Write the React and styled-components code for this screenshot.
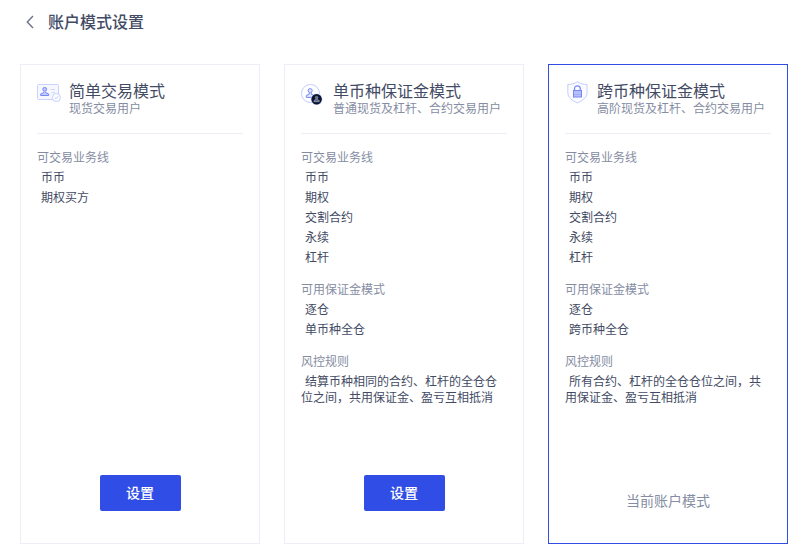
import React from "react";
import styled, { createGlobalStyle } from "styled-components";

const modes = [
  {
    title: "简单交易模式",
    desc: "现货交易用户",
    icon: "simple",
    groups: [{ label: "可交易业务线", items: ["币币", "期权买方"] }],
  },
  {
    title: "单币种保证金模式",
    desc: "普通现货及杠杆、合约交易用户",
    icon: "single",
    groups: [
      { label: "可交易业务线", items: ["币币", "期权", "交割合约", "永续", "杠杆"] },
      { label: "可用保证金模式", items: ["逐仓", "单币种全仓"] },
      {
        label: "风控规则",
        items: ["结算币种相同的合约、杠杆的全仓仓位之间，共用保证金、盈亏互相抵消"],
      },
    ],
  },
  {
    title: "跨币种保证金模式",
    desc: "高阶现货及杠杆、合约交易用户",
    icon: "multi",
    current: true,
    groups: [
      { label: "可交易业务线", items: ["币币", "期权", "交割合约", "永续", "杠杆"] },
      { label: "可用保证金模式", items: ["逐仓", "跨币种全仓"] },
      {
        label: "风控规则",
        items: ["所有合约、杠杆的全仓仓位之间，共用保证金、盈亏互相抵消"],
      },
    ],
  },
];

function SimpleIcon() {
  return (
    <Icon viewBox="0 0 24 24">
      <rect x="0.5" y="3.5" width="21" height="15" rx="1" fill="#f7f8ff" stroke="#c9d2ff" />
      <path d="M13.5 8.5h4.5M14.5 11.5h3.5" stroke="#cdd5ff" />
      <circle cx="7.7" cy="8.3" r="1.9" fill="#c3cbff" stroke="#7486f6" />
      <path d="M6.7 10.7v1L3.7 13v1.5h8V13l-3-1.3v-1" fill="#c3cbff" stroke="#7486f6" />
      <circle cx="19.4" cy="16.5" r="4" fill="#fff" stroke="#c3cdff" />
      <path d="m17.7 16.5 1.3 1.3 2.3-2.5" fill="none" stroke="#bac5ff" />
    </Icon>
  );
}

function SingleIcon() {
  return (
    <Icon viewBox="0 0 24 24">
      <circle cx="9.5" cy="12.5" r="9" fill="#fff" stroke="#c3cdff" />
      <circle cx="9.2" cy="9.6" r="2" fill="#e3e8ff" stroke="#7486f6" />
      <path d="M8.2 11.7v1.6L5.3 14.5v1.9h8v-1.9l-3-1.2v-1.6" fill="#e3e8ff" stroke="#7486f6" />
      <circle cx="15.6" cy="18.2" r="5.8" fill="#c9d2ff" />
      <circle cx="15.6" cy="18.2" r="5.2" fill="#0c1430" />
      <circle cx="15.6" cy="16.6" r="1.2" fill="#5c6480" stroke="#a4abc5" strokeWidth="0.7" />
      <path d="M15 18v.7l-2 .8v1.2h5.2v-1.2l-2-.8V18" fill="#5c6480" stroke="#a4abc5" strokeWidth="0.7" />
    </Icon>
  );
}

function MultiIcon() {
  return (
    <Icon viewBox="0 0 24 24">
      <path
        d="M12.4.8c3 1.9 6.200 2.600 9.600 2.700v8c0 5-4.200 8.200-9.600 10.300C7 19.700 2.800 16.500 2.800 11.500v-8C6.200 3.400 9.400 2.700 12.400.8z"
        fill="#fbfbff"
        stroke="#c3cdff"
      />
      <path d="M9.500 10V7.700a2.900 2.900 0 0 1 5.800 0V10" fill="none" stroke="#7486f6" strokeWidth="1.200" />
      <rect x="8.500" y="9.500" width="8" height="6.500" fill="#b4bfff" stroke="#7486f6" />
      <path d="M9 13.500h7" stroke="#a0adff" />
    </Icon>
  );
}

const icons = { simple: SimpleIcon, single: SingleIcon, multi: MultiIcon };

function ModeCard({ mode }) {
  const ModeIcon = icons[mode.icon];
  return (
    <Card $active={mode.current}>
      <CardHead>
        <ModeIcon />
        <div>
          <CardTitle>{mode.title}</CardTitle>
          <CardDesc>{mode.desc}</CardDesc>
        </div>
      </CardHead>
      <Groups>
        {mode.groups.map((group) => (
          <div key={group.label}>
            <Label>{group.label}</Label>
            {group.items.map((item) => (
              <Item key={item}>{item}</Item>
            ))}
          </div>
        ))}
      </Groups>
      <CardFoot>
        {mode.current ? <Current>当前账户模式</Current> : <Button>设置</Button>}
      </CardFoot>
    </Card>
  );
}

export default function App() {
  return (
    <Page>
      <GlobalStyle />
      <Header>
        <Back viewBox="0 0 8 14">
          <path d="M7 1 1.300 7 7 13" fill="none" stroke="#6b7390" strokeWidth="1.400" />
        </Back>
        <Heading>账户模式设置</Heading>
      </Header>
      <Cards>
        {modes.map((mode) => (
          <ModeCard key={mode.title} mode={mode} />
        ))}
      </Cards>
    </Page>
  );
}

const GlobalStyle = createGlobalStyle`
  * {
    box-sizing: border-box;
  }

  body {
    margin: 0;
    background: #fff;
    font-family: "Noto Sans CJK SC", sans-serif;
    overflow: hidden;
  }
`;

const Page = styled.main`
  width: 804px;
  height: 555px;
`;

const Header = styled.header`
  display: flex;
  align-items: center;
  height: 44px;
  padding-left: 26px;
`;

const Back = styled.svg`
  width: 8px;
  height: 14px;
  margin-right: 14px;
`;

const Heading = styled.h1`
  margin: 0 0 2px;
  font-size: 16px;
  font-weight: 500;
  line-height: 24px;
  color: #434b64;
`;

const Cards = styled.div`
  display: flex;
  gap: 24px;
  padding: 20px 16px 0 20px;
`;

const Card = styled.section`
  display: flex;
  flex-direction: column;
  flex: none;
  width: 240px;
  height: 480px;
  padding: 15px 16px 32px;
  border: 1px solid ${(props) => (props.$active ? "#304ee6" : "#ebedf7")};
`;

const CardHead = styled.div`
  display: flex;
  gap: 8px;
  padding-bottom: 17px;
  border-bottom: 1px solid #ebedf7;
  white-space: nowrap;
`;

const Icon = styled.svg`
  flex: none;
  width: 24px;
  height: 24px;
  margin-top: 1px;
`;

const CardTitle = styled.h2`
  margin: 0;
  font-size: 16px;
  font-weight: 400;
  line-height: 20px;
  color: #434b64;
`;

const CardDesc = styled.p`
  margin: 0;
  font-size: 12px;
  line-height: 16px;
  color: #868da3;
`;

const Groups = styled.div`
  display: flex;
  flex-direction: column;
  gap: 16px;
  padding-top: 15px;
  font-size: 12px;
  line-height: 16px;
`;

const Label = styled.div`
  color: #868da3;
`;

const Item = styled.p`
  margin: 4px 0 0;
  text-indent: 4px;
  color: #434b64;
`;

const CardFoot = styled.div`
  display: flex;
  justify-content: center;
  margin-top: auto;
`;

const Button = styled.button`
  width: 81px;
  height: 36px;
  margin-left: 1px;
  padding: 0 1px 2px 0;
  border: 0;
  border-radius: 2px;
  background: #304ee6;
  color: #fff;
  font-family: inherit;
  font-size: 14px;
  font-weight: 500;
  line-height: 34px;
`;

const Current = styled.span`
  padding-bottom: 1px;
  font-size: 14px;
  line-height: 20px;
  color: #868da3;
`;
